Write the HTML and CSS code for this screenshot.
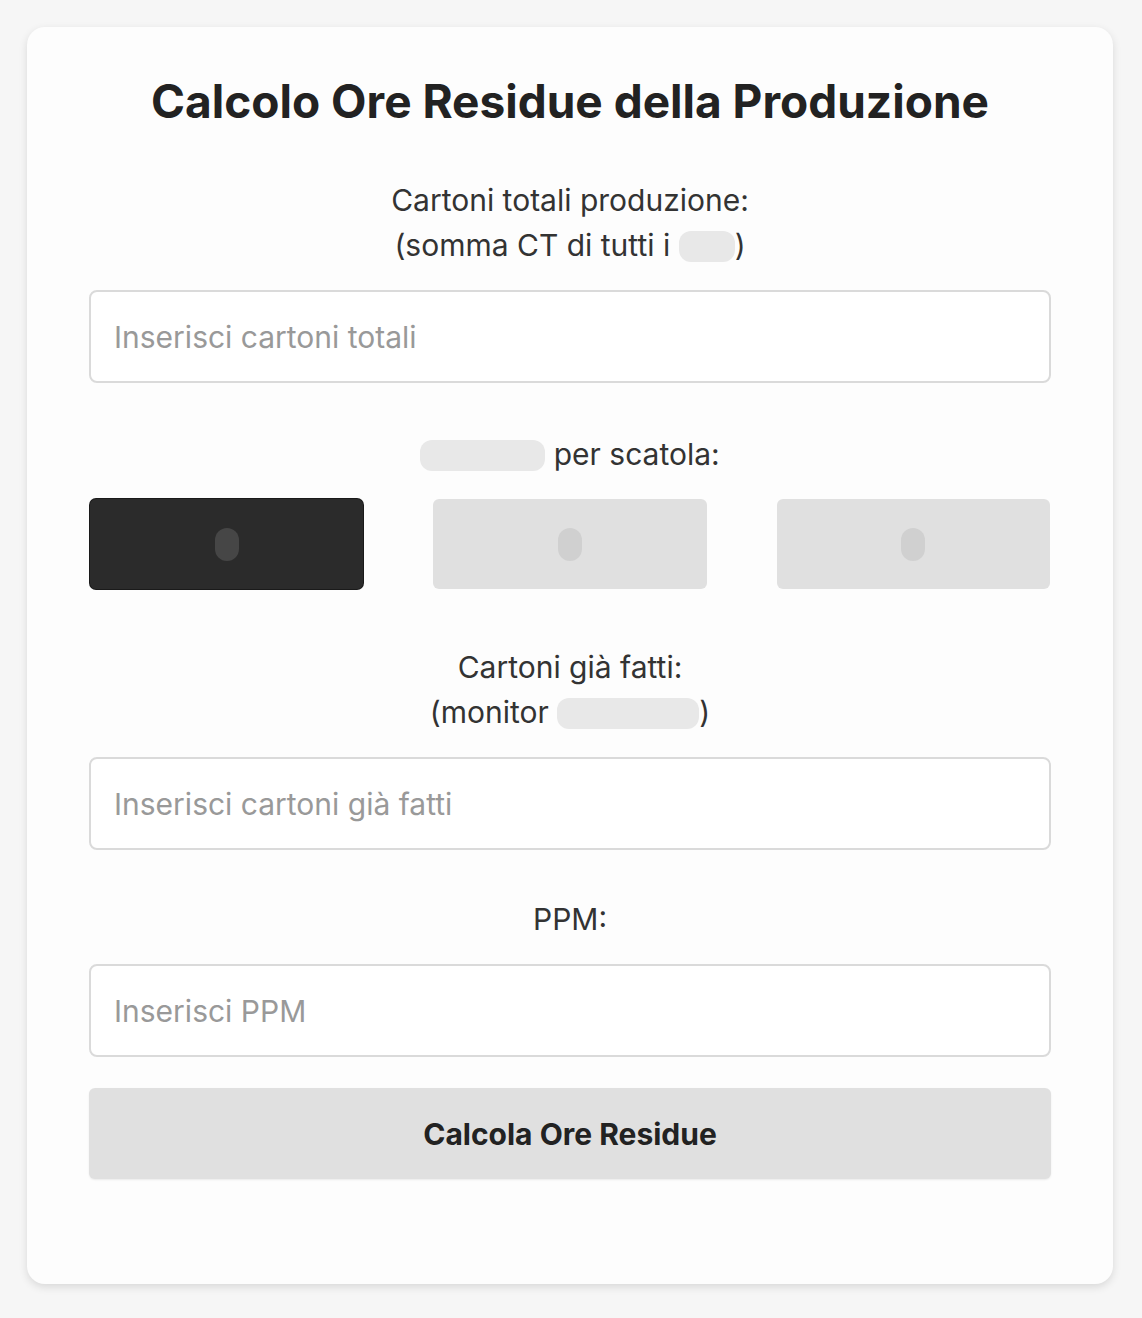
FILE: index.html
```html
<html>

<head>
	<meta charset="utf-8">
	<link rel="stylesheet" href="styles.css">
</head>

<body>

	<div class="card">
		<h1>Calcolo Ore Residue della Produzione</h1>

		<label class="label" for="totali">
			Cartoni totali produzione:<br>
			(somma CT di tutti i <span class="redact w-56"></span>)
		</label>
		<input class="field" id="totali" type="text" placeholder="Inserisci cartoni totali">

		<div class="label mt-big">
			<span class="redact w-125"></span> per scatola:
		</div>
		<div class="choices">
			<button class="choice active"><span class="digit"></span></button>
			<button class="choice"><span class="digit"></span></button>
			<button class="choice"><span class="digit"></span></button>
		</div>

		<label class="label mt-choices" for="fatti">
			Cartoni già fatti:<br>
			(monitor <span class="redact w-142"></span>)
		</label>
		<input class="field" id="fatti" type="text" placeholder="Inserisci cartoni già fatti">

		<label class="label mt-ppm" for="ppm">PPM:</label>
		<input class="field" id="ppm" type="text" placeholder="Inserisci PPM">

		<button class="submit">Calcola Ore Residue</button>

		<div class="result"></div>
	</div>

</body>

</html>
```

FILE: styles.css
```css
* {
	box-sizing: border-box;
}

html {
	font-family: Inter, "Noto Sans", sans-serif;
	background: #f6f6f6;
}

body {
	margin: 0;
	padding: 27px 29px 34px 27px;
}

.card {
	display: flex;
	flex-direction: column;
	background: #fdfdfd;
	border-radius: 18px;
	box-shadow: 0 3px 8px rgba(0, 0, 0, .12);
	padding: 47px 62px 102px;
	min-height: 1257px;
}

h1 {
	margin: 0;
	font-size: 46px;
	line-height: 55px;
	font-weight: 700;
	text-align: center;
	color: #222;
}

.label {
	display: block;
	margin-top: 49px;
	margin-bottom: 22px;
	font-size: 30px;
	line-height: 45px;
	text-align: center;
	color: #333;
}

.mt-big {
	margin-top: 49px;
}

.mt-choices {
	margin-top: 56px;
}

.mt-ppm {
	margin-top: 47px;
}

.redact {
	display: inline-block;
	height: 31px;
	border-radius: 12px;
	background: #e8e8e8;
	vertical-align: -6px;
}

.w-56 {
	width: 56px;
}

.w-125 {
	width: 125px;
}

.w-142 {
	width: 142px;
}

.field {
	width: 100%;
	height: 93px;
	padding: 0 23px;
	border: 2px solid #dadada;
	border-radius: 8px;
	background: #fff;
	font-family: inherit;
	font-size: 30px;
	color: #333;
}

.field::placeholder {
	color: #999;
}

.choices {
	display: flex;
	gap: 70px;
	margin-top: 0;
	padding: 0 1px;
}

.choice {
	flex: 1;
	display: flex;
	align-items: center;
	justify-content: center;
	height: 90px;
	border: none;
	border-radius: 6px;
	background: #e0e0e0;
}

.choice.active {
	background: #2b2b2b;
	box-shadow: 0 0 0 1px #1a1a1a;
}

.digit {
	width: 24px;
	height: 33px;
	border-radius: 12px;
	background: #d0d0d0;
}

.choice.active .digit {
	background: #464646;
}

.submit {
	margin-top: 31px;
	height: 91px;
	border: none;
	border-radius: 6px;
	background: #e0e0e0;
	font-family: inherit;
	font-size: 30px;
	font-weight: 700;
	color: #222;
	box-shadow: 0 1px 2px rgba(0, 0, 0, .08);
}
```
